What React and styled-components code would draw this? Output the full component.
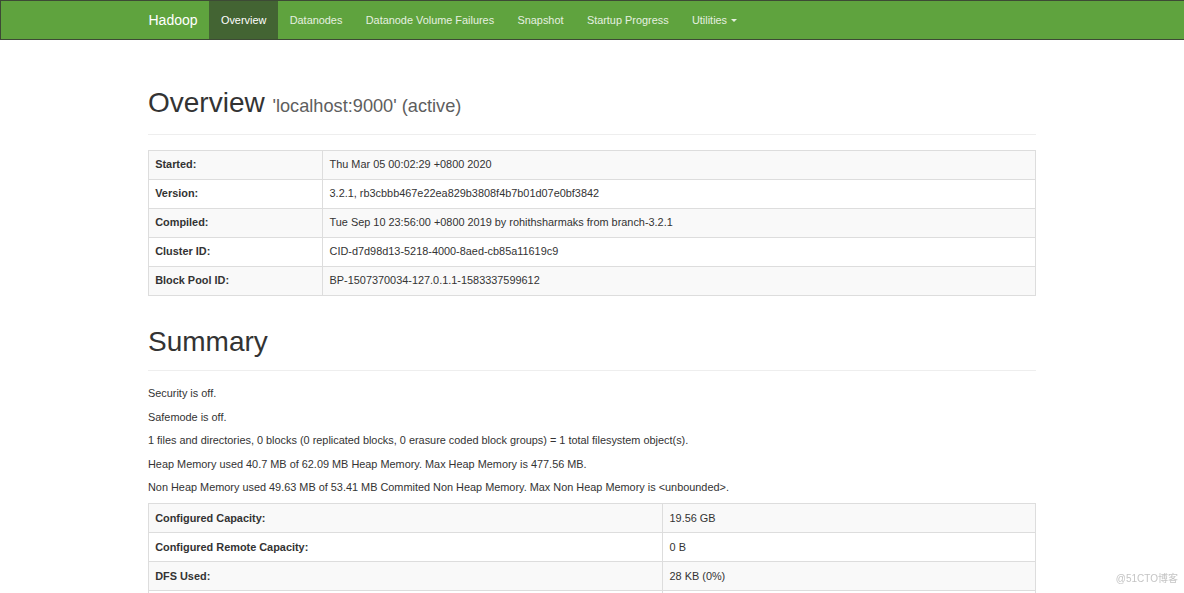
import React from 'react';
import styled, { createGlobalStyle } from 'styled-components';

const GlobalStyle = createGlobalStyle`
  html, body {
    margin: 0;
    padding: 0;
    overflow: hidden;
  }
  body {
    font-family: "Liberation Sans", Arial, Helvetica, sans-serif;
    font-size: 10.9px;
    line-height: 15.6px;
    color: #333;
    background: #fff;
  }
`

const NavBar = styled.header`
  height: 38px;
  background-color: #5fa33e;
  border: 1px solid #3d4a35;
  border-right: none;
`

const NavInner = styled.div`
  width: 888px;
  margin: 0 auto;
  display: flex;
  align-items: stretch;
  height: 100%;
`

const Brand = styled.a`
  display: flex;
  align-items: center;
  padding-top: 1px;
  font-size: 14px;
  color: #fff;
  padding-right: 11.7px;
  text-decoration: none;
`

const NavList = styled.ul`
  display: flex;
  list-style: none;
  margin: 0;
  padding: 0;
`

const NavItem = styled.li`
  display: flex;
  align-items: center;
  padding: 1px 11.7px 0;
  color: ${(p) => (p.active ? '#fff' : '#e6f0e0')};
  background-color: ${(p) => (p.active ? '#436433' : 'transparent')};
  font-size: 10.9px;
  cursor: pointer;
`

const Caret = styled.span`
  display: inline-block;
  width: 0;
  height: 0;
  margin-left: 4px;
  border-top: 3px solid #e6f0e0;
  border-left: 3px solid transparent;
  border-right: 3px solid transparent;
  vertical-align: middle;
`

const Container = styled.div`
  width: 888px;
  margin: 0 auto;
`

const PageHeader = styled.div`
  margin-top: ${(p) => p.top}px;
  padding-bottom: 11.8px;
  margin-bottom: 15.6px;
  border-bottom: 1px solid #eee;
`

const Title = styled.h1`
  margin: 0;
  font-size: 28px;
  line-height: 30.9px;
  font-weight: 500;
  color: #333;
`

const Small = styled.small`
  font-size: 18.2px;
  color: #5e5e5e;
  font-weight: 400;
`

const Table = styled.table`
  width: 100%;
  border-collapse: collapse;
  border: 1px solid #ddd;
  margin-bottom: 15.6px;
`

const Row = styled.tr`
  background-color: ${(p) => (p.odd ? '#f9f9f9' : '#fff')};
`

const Label = styled.th`
  text-align: left;
  font-weight: bold;
  padding: 6.2px;
  border: 1px solid #ddd;
  width: ${(p) => p.w}px;
  line-height: 15.6px;
  vertical-align: top;
`

const Value = styled.td`
  padding: 6.2px;
  border: 1px solid #ddd;
  line-height: 15.6px;
  vertical-align: top;
`

const Para = styled.p`
  margin: 0 0 7.8px;
`

const Watermark = styled.div`
  position: fixed;
  right: 6px;
  bottom: 6px;
  font-size: 10px;
  color: #c4c4c4;
  font-family: "Liberation Sans", "Noto Sans CJK SC", sans-serif;
`

const navItems = [
  'Overview',
  'Datanodes',
  'Datanode Volume Failures',
  'Snapshot',
  'Startup Progress',
]

const overviewRows = [
  ['Started:', 'Thu Mar 05 00:02:29 +0800 2020'],
  ['Version:', '3.2.1, rb3cbbb467e22ea829b3808f4b7b01d07e0bf3842'],
  ['Compiled:', 'Tue Sep 10 23:56:00 +0800 2019 by rohithsharmaks from branch-3.2.1'],
  ['Cluster ID:', 'CID-d7d98d13-5218-4000-8aed-cb85a11619c9'],
  ['Block Pool ID:', 'BP-1507370034-127.0.1.1-1583337599612'],
]

const summaryRows = [
  ['Configured Capacity:', '19.56 GB'],
  ['Configured Remote Capacity:', '0 B'],
  ['DFS Used:', '28 KB (0%)'],
  ['Non DFS Used:', '7.83 GB'],
  ['DFS Remaining:', '10.71 GB (54.78%)'],
  ['Block Pool Used:', '28 KB (0%)'],
]

const summaryLines = [
  'Security is off.',
  'Safemode is off.',
  '1 files and directories, 0 blocks (0 replicated blocks, 0 erasure coded block groups) = 1 total filesystem object(s).',
  'Heap Memory used 40.7 MB of 62.09 MB Heap Memory. Max Heap Memory is 477.56 MB.',
  'Non Heap Memory used 49.63 MB of 53.41 MB Commited Non Heap Memory. Max Non Heap Memory is <unbounded>.',
]

function InfoTable({ rows, labelWidth }) {
  return (
    <Table>
      <tbody>
        {rows.map(([k, v], i) => (
          <Row key={k} odd={i % 2 === 0}>
            <Label w={labelWidth}>{k}</Label>
            <Value>{v}</Value>
          </Row>
        ))}
      </tbody>
    </Table>
  )
}

export default function App() {
  return (
    <>
      <GlobalStyle />
      <NavBar>
        <NavInner>
          <Brand>Hadoop</Brand>
          <NavList>
            {navItems.map((item, i) => (
              <NavItem key={item} active={i === 0}>{item}</NavItem>
            ))}
            <NavItem>
              Utilities<Caret />
            </NavItem>
          </NavList>
        </NavInner>
      </NavBar>
      <Container>
        <PageHeader top={48}>
          <Title>
            Overview <Small>'localhost:9000' (active)</Small>
          </Title>
        </PageHeader>
        <InfoTable rows={overviewRows} labelWidth={161} />

        <PageHeader top={31}>
          <Title>Summary</Title>
        </PageHeader>
        {summaryLines.map((line) => (
          <Para key={line}>{line}</Para>
        ))}
        <InfoTable rows={summaryRows} labelWidth={501} />
      </Container>
      <Watermark>@51CTO博客</Watermark>
    </>
  )
}
